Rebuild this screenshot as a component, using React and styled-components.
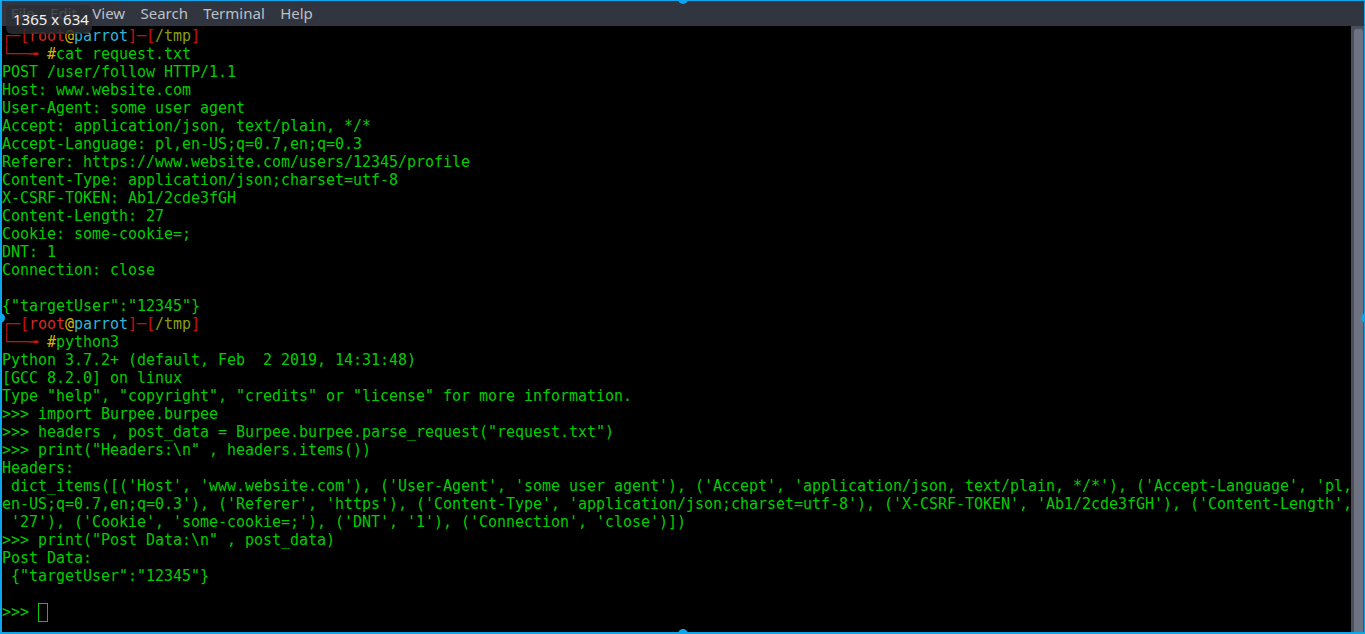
import React from "react";
import styled, { createGlobalStyle } from "styled-components";

const Global = createGlobalStyle`
  html, body { margin: 0; padding: 0; background: #000; overflow: hidden; }
  #root { width: 1365px; height: 634px; }
`;

const Window = styled.div`
  position: relative;
  box-sizing: border-box;
  width: 1365px;
  height: 634px;
  display: flex;
  flex-direction: column;
  border-style: solid;
  border-color: #0ba6ee;
  border-width: 1px 1px 2px 2px;
  background: #000;
  overflow: hidden;
`;

const MenuBar = styled.div`
  height: 25px;
  flex: none;
  display: flex;
  align-items: center;
  padding-left: 1px;
  background: #31353f;
  font-family: "Noto Sans", sans-serif;
  font-size: 15px;
  color: #bcc0c8;
`;

const MenuItem = styled.span`
  padding: 0 7.7px;
  line-height: 25px;
`;

const Body = styled.div`
  flex: 1;
  display: flex;
  min-height: 0;
`;

const Screen = styled.div`
  flex: 1;
  padding: 1px 0 0 0;
  font-family: "DejaVu Sans Mono", monospace;
  font-size: 15px;
  letter-spacing: -0.03px;
  color: #00cd00;
  overflow: hidden;
`;

const Line = styled.div`
  height: 18px;
  line-height: 18px;
  white-space: pre;
`;

const TONES = {
  frame: "#cc1111",
  root: "#d42a2a",
  at: "#dcb400",
  host: "#2fb6d6",
  dir: "#8a9e10",
  hash: "#dcb400",
  text: "#00cd00",
};

const Seg = styled.span`
  color: ${(p) => TONES[p.$tone] || TONES.text};
`;

const Cursor = styled.span`
  display: inline-block;
  box-sizing: border-box;
  width: 10px;
  height: 19px;
  border: 1px solid #00cd00;
  vertical-align: -5px;
`;

const ScrollTrack = styled.div`
  width: 9px;
  flex: none;
  background: #4b4f5c;
  padding: 3px 1px 0 3px;
  display: flex;
`;

const ScrollThumb = styled.div`
  flex: 1;
  background: #6f7381;
  border-radius: 3px 3px 0 0;
`;

const Handle = styled.div`
  position: absolute;
  width: 10px;
  height: 10px;
  border-radius: 50%;
  background: #0ba6ee;
  ${(p) => p.$pos === "top" && "top: -7px; left: 676px;"}
  ${(p) => p.$pos === "bottom" && "bottom: -7px; left: 676px;"}
  ${(p) => p.$pos === "left" && "left: -7px; top: 312px;"}
  ${(p) => p.$pos === "right" && "right: -7px; top: 312px;"}
`;

const SizeTip = styled.div`
  position: absolute;
  left: 4px;
  top: 4px;
  width: 86px;
  height: 29px;
  border-radius: 6px;
  background: rgba(44, 46, 52, 0.82);
  color: #f2f2f2;
  font-family: "Noto Sans", sans-serif;
  font-size: 15px;
  line-height: 29px;
  padding-left: 7px;
  box-sizing: border-box;
  white-space: nowrap;
`;

const prompt = (cmd) => [
  [
    ["frame", "┌─["],
    ["root", "root"],
    ["at", "@"],
    ["host", "parrot"],
    ["frame", "]─["],
    ["dir", "/tmp"],
    ["frame", "]"],
  ],
  [
    ["frame", "└──╼ "],
    ["hash", "#"],
    ["text", cmd],
  ],
];

const plain = (s) => [["text", s]];

const lines = [
  ...prompt("cat request.txt"),
  plain("POST /user/follow HTTP/1.1"),
  plain("Host: www.website.com"),
  plain("User-Agent: some user agent"),
  plain("Accept: application/json, text/plain, */*"),
  plain("Accept-Language: pl,en-US;q=0.7,en;q=0.3"),
  plain("Referer: https://www.website.com/users/12345/profile"),
  plain("Content-Type: application/json;charset=utf-8"),
  plain("X-CSRF-TOKEN: Ab1/2cde3fGH"),
  plain("Content-Length: 27"),
  plain("Cookie: some-cookie=;"),
  plain("DNT: 1"),
  plain("Connection: close"),
  plain(""),
  plain('{"targetUser":"12345"}'),
  ...prompt("python3"),
  plain("Python 3.7.2+ (default, Feb  2 2019, 14:31:48)"),
  plain("[GCC 8.2.0] on linux"),
  plain('Type "help", "copyright", "credits" or "license" for more information.'),
  plain(">>> import Burpee.burpee"),
  plain('>>> headers , post_data = Burpee.burpee.parse_request("request.txt")'),
  plain('>>> print("Headers:\\n" , headers.items())'),
  plain("Headers:"),
  plain(
    " dict_items([('Host', 'www.website.com'), ('User-Agent', 'some user agent'), ('Accept', 'application/json, text/plain, */*'), ('Accept-Language', 'pl,"
  ),
  plain(
    "en-US;q=0.7,en;q=0.3'), ('Referer', 'https'), ('Content-Type', 'application/json;charset=utf-8'), ('X-CSRF-TOKEN', 'Ab1/2cde3fGH'), ('Content-Length',"
  ),
  plain(" '27'), ('Cookie', 'some-cookie=;'), ('DNT', '1'), ('Connection', 'close')])"),
  plain('>>> print("Post Data:\\n" , post_data)'),
  plain("Post Data:"),
  plain(' {"targetUser":"12345"}'),
  plain(""),
];

const menus = ["File", "Edit", "View", "Search", "Terminal", "Help"];

export default function App() {
  return (
    <>
      <Global />
      <Window>
        <MenuBar>
          {menus.map((m) => (
            <MenuItem key={m}>{m}</MenuItem>
          ))}
        </MenuBar>
        <Body>
          <Screen>
            {lines.map((segs, i) => (
              <Line key={i}>
                {segs.map(([tone, txt], j) => (
                  <Seg key={j} $tone={tone}>
                    {txt}
                  </Seg>
                ))}
              </Line>
            ))}
            <Line>
              <Seg $tone="text">{">>> "}</Seg>
              <Cursor />
            </Line>
          </Screen>
          <ScrollTrack>
            <ScrollThumb />
          </ScrollTrack>
        </Body>
        <SizeTip>1365 x 634</SizeTip>
        <Handle $pos="top" />
        <Handle $pos="bottom" />
        <Handle $pos="left" />
        <Handle $pos="right" />
      </Window>
    </>
  );
}
